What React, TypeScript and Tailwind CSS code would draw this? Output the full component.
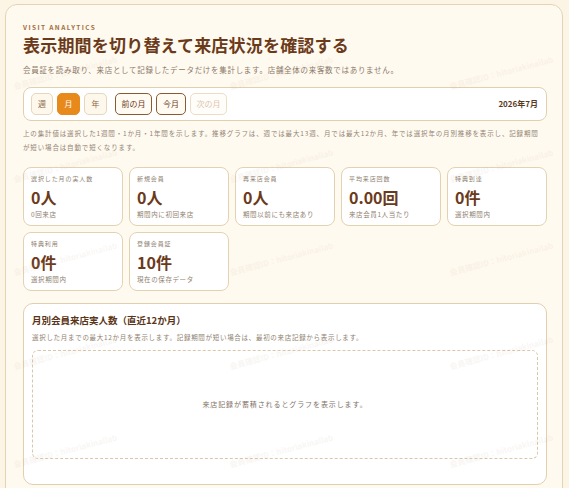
import React from "react";

const font = { fontFamily: '"Noto Sans CJK JP", "Noto Sans", sans-serif' };

interface Stat {
    label: string;
    value: string;
    sub: string;
}

const stats: Stat[] = [
    { label: "選択した月の実人数", value: "0人", sub: "0回来店" },
    { label: "新規会員", value: "0人", sub: "期間内に初回来店" },
    { label: "再来店会員", value: "0人", sub: "期間以前にも来店あり" },
    { label: "平均来店回数", value: "0.00回", sub: "来店会員1人当たり" },
    { label: "特典到達", value: "0件", sub: "選択期間内" },
    { label: "特典利用", value: "0件", sub: "選択期間内" },
    { label: "登録会員証", value: "10件", sub: "現在の保存データ" },
];

const marks: { x: number; y: number }[] = [];
[62, 155, 248, 342, 440].forEach((y) => {
    [6, 222, 442].forEach((x) => marks.push({ x, y }));
});

const StatCard: React.FC<{ stat: Stat }> = ({ stat }) => (
    <div className="h-[59px] rounded-[8px] border border-[#e3d2b1] bg-white pl-[7px] pt-[7px]">
        <div className="text-[6px] leading-[8px] tracking-[0.9px] text-[#8f7f70]">{stat.label}</div>
        <div className="mt-[4px] text-[16px] font-bold leading-[20px] text-[#6b3a1a]">{stat.value}</div>
        <div className="mt-[2px] text-[6.5px] leading-[10px] tracking-[0.6px] text-[#8f7f70]">{stat.sub}</div>
    </div>
);

const App: React.FC = () => {
    return (
        <div className="min-h-screen overflow-hidden bg-[#fcf5e6] pl-[5px] pt-[4px]" style={font}>
            <div className="relative w-[558px] overflow-hidden rounded-[12px] border border-[#e4d4b4] bg-[#fffaf0] pb-[20px] pl-[17px] pr-[15px] pt-[18px]">
                <div className="text-[6.5px] font-bold leading-[8px] tracking-[1.4px] text-[#a36d3c]">VISIT ANALYTICS</div>
                <h1 className="mt-[2px] text-[17px] font-bold leading-[24px] tracking-[0.2px] text-[#6b3a1a]">
                    表示期間を切り替えて来店状況を確認する
                </h1>
                <p className="mt-[7px] text-[7.5px] leading-[12px] tracking-[0.7px] text-[#8a7868]">
                    会員証を読み取り、来店として記録したデータだけを集計します。店舗全体の来客数ではありません。
                </p>

                <div className="mt-[11px] flex h-[34px] items-center rounded-[8px] border border-[#e1cfad] bg-white pl-[7px] pr-[8px]">
                    <div className="flex items-center gap-[4px]">
                        <button className="h-[22px] w-[22px] rounded-[5px] border border-[#e6d6bb] bg-[#fdf7ec] text-[8px] text-[#8a6a4a]">週</button>
                        <button className="h-[22px] w-[23px] rounded-[5px] border border-[#e8891c] bg-[#e8891c] text-[8px] text-white">月</button>
                        <button className="h-[22px] w-[23px] rounded-[5px] border border-[#e6d6bb] bg-[#fdf7ec] text-[8px] text-[#8a6a4a]">年</button>
                    </div>
                    <div className="ml-[8px] flex items-center gap-[4px]">
                        <button className="h-[22px] w-[37px] rounded-[5px] border border-[#8a5a30] bg-[#fffaf2] text-[8px] text-[#6b3a1a]">前の月</button>
                        <button className="h-[22px] w-[30px] rounded-[5px] border border-[#8a5a30] bg-[#fffaf2] text-[8px] text-[#6b3a1a]">今月</button>
                        <button className="h-[22px] w-[37px] rounded-[5px] border border-[#eddcc6] bg-[#fffdf9] text-[8px] text-[#dcc4ac]">次の月</button>
                    </div>
                    <div className="ml-auto text-[8px] font-bold text-[#5a3a1f]">2026年7月</div>
                </div>

                <p className="mt-[5px] text-[6.5px] leading-[14px] tracking-[0.85px] text-[#928474]">
                    上の集計値は選択した1週間・1か月・1年間を示します。推移グラフは、週では最大13週、月では最大12か月、年では選択年の月別推移を表示し、記録期間
                    <br />
                    が短い場合は自動で短くなります。
                </p>

                <div className="mt-[13px] grid grid-cols-5 gap-[6px]">
                    {stats.map((s, i) => (
                        <StatCard key={i} stat={s} />
                    ))}
                </div>

                <div className="mt-[12px] rounded-[10px] border border-[#e1cfad] bg-white px-[8px] pb-[25px] pt-[9px]">
                    <div className="text-[9.5px] font-bold leading-[14px] text-[#5a3518]">月別会員来店実人数（直近12か月）</div>
                    <p className="mt-[5px] text-[6.5px] leading-[10px] tracking-[0.7px] text-[#8f7f70]">
                        選択した月までの最大12か月を表示します。記録期間が短い場合は、最初の来店記録から表示します。
                    </p>
                    <div className="mt-[8px] flex h-[109px] items-center justify-center rounded-[6px] border border-dashed border-[#d9c7aa]">
                        <span className="text-[7px] tracking-[0.9px] text-[#7f7268]">来店記録が蓄積されるとグラフを表示します。</span>
                    </div>
                </div>

                <div className="pointer-events-none absolute inset-0">
                    {marks.map((m, i) => (
                        <span
                            key={i}
                            className="absolute -rotate-[15deg] whitespace-nowrap text-[8px] font-bold text-[#c4ab92] opacity-10"
                            style={{ left: m.x, top: m.y }}
                        >
                            会員確認ID：hitoriakinailab
                        </span>
                    ))}
                </div>
            </div>
        </div>
    );
};

export default App;
